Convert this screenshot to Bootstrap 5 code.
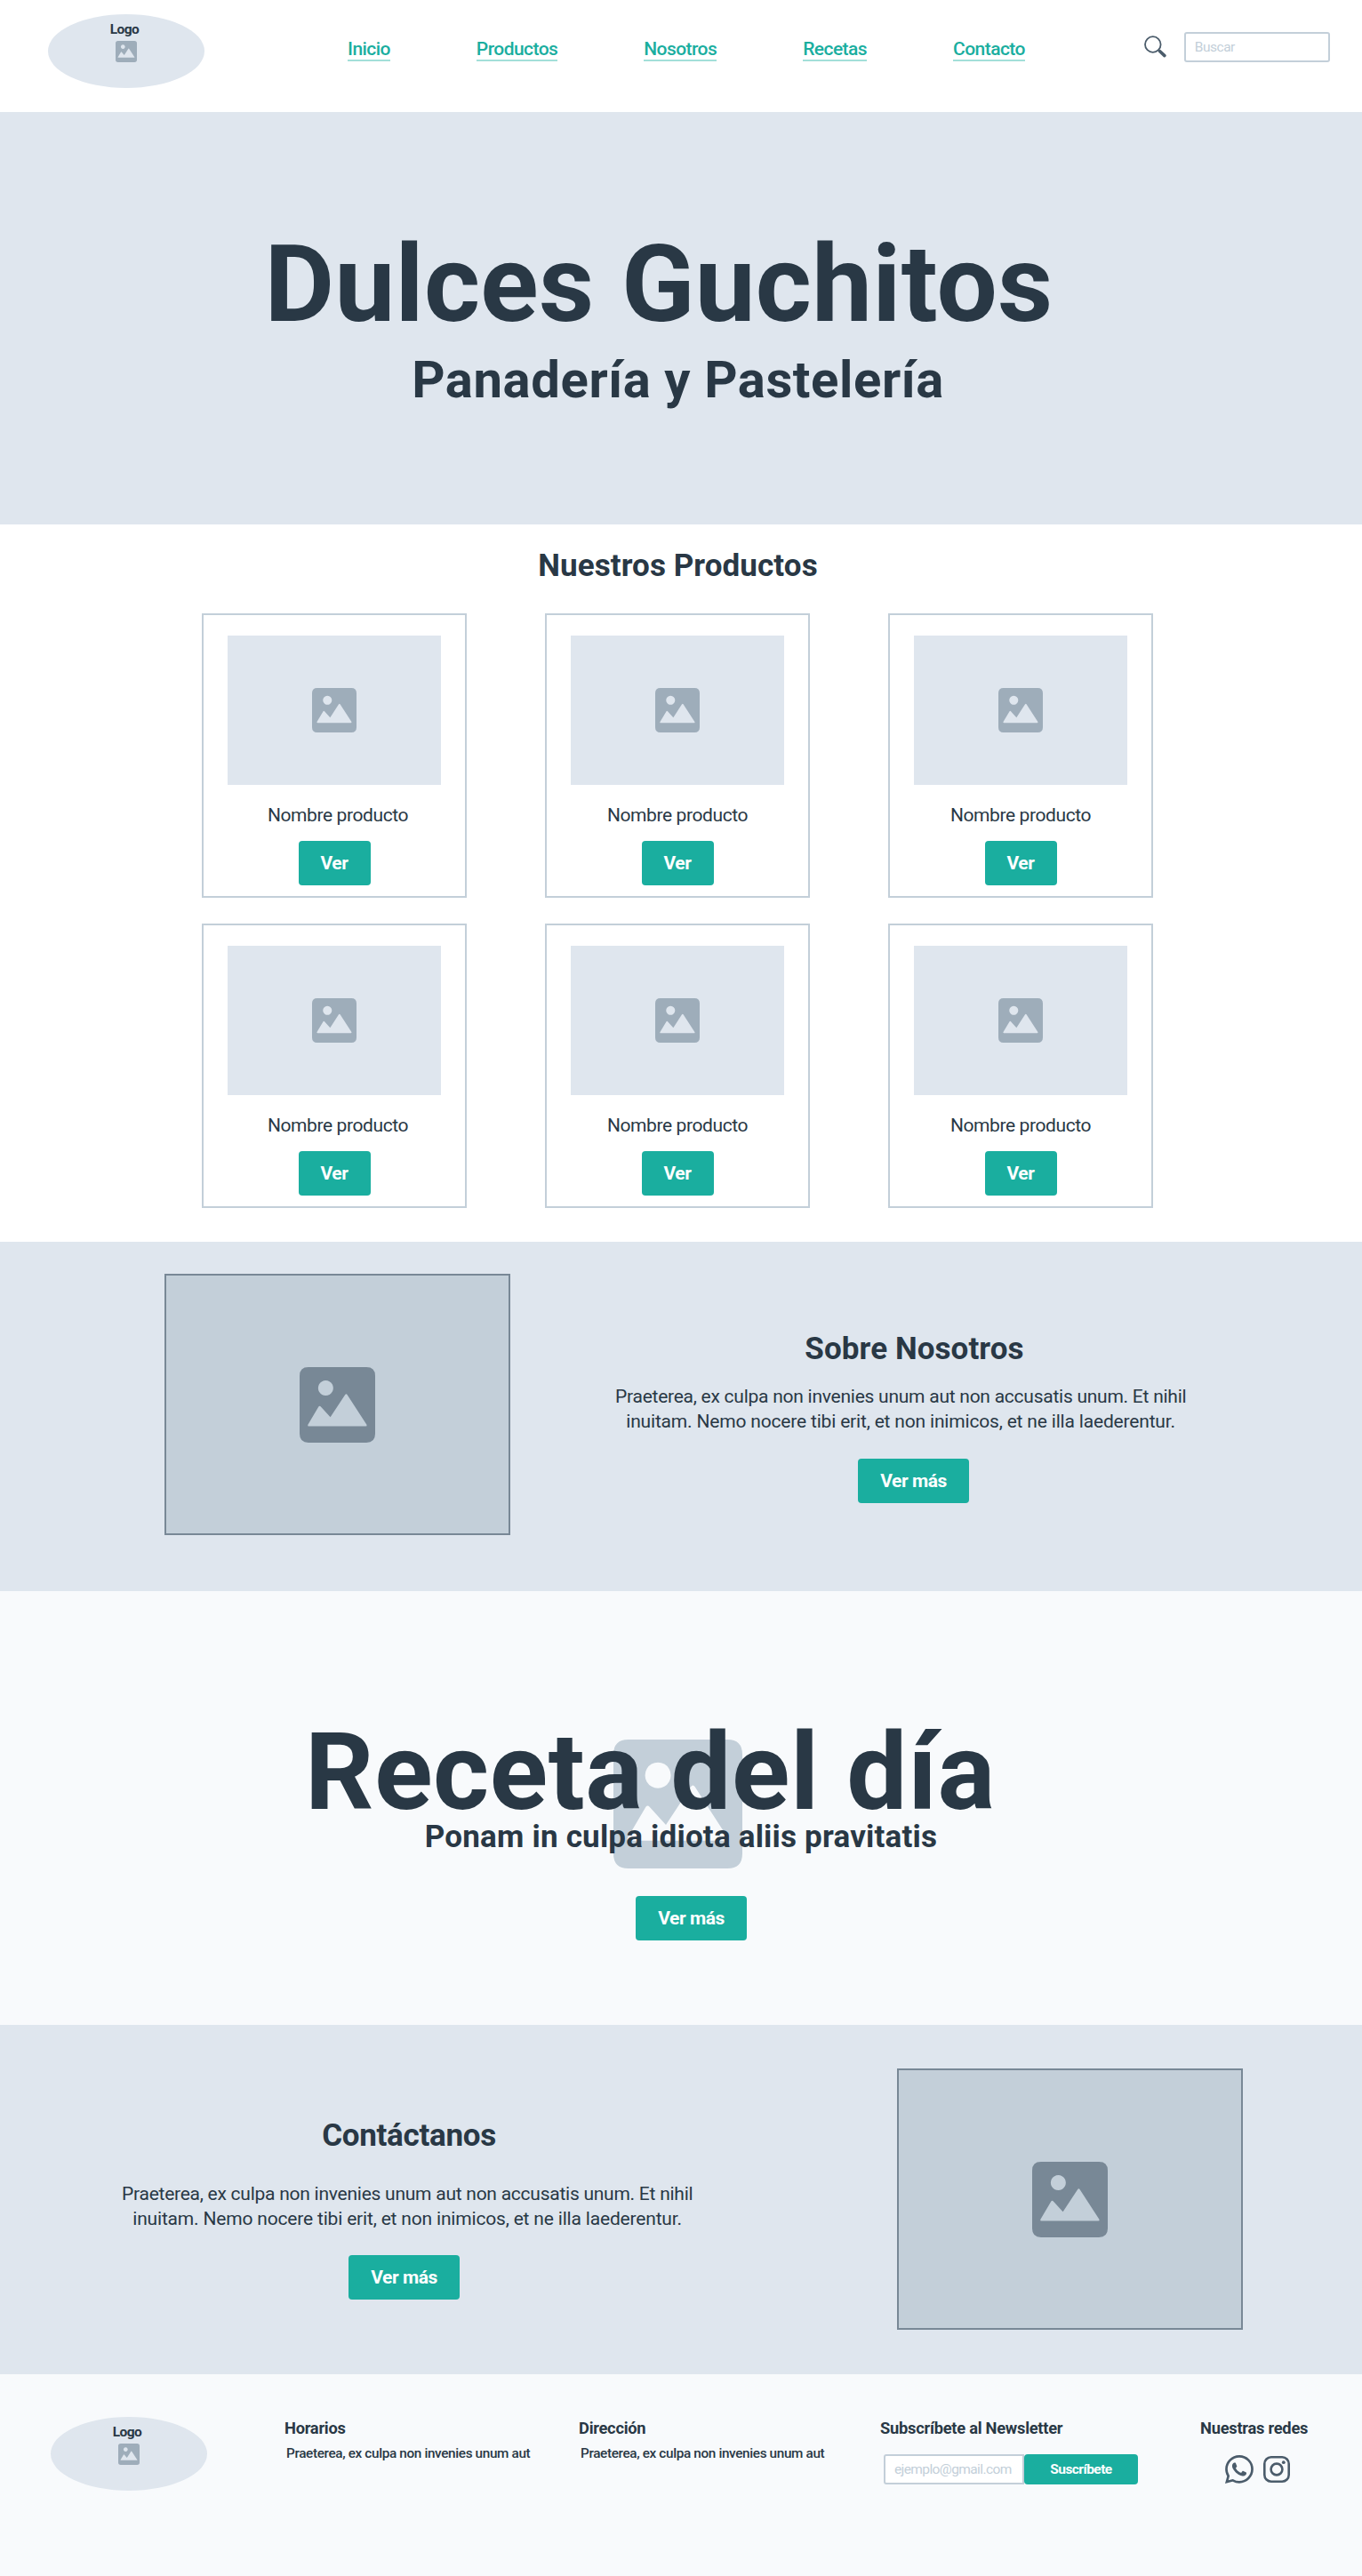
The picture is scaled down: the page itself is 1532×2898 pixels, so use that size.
<!DOCTYPE html>
<html lang="es">
<head>
<meta charset="utf-8">
<meta name="viewport" content="width=device-width, initial-scale=1">
<title>Dulces Guchitos</title>
<link href="https://cdn.jsdelivr.net/npm/bootstrap@5.3.0/dist/css/bootstrap.min.css" rel="stylesheet">
<style>
  :root { --ink:#293845; --teal:#1aae9f; --mist:#dfe6ee; --steel:#c3cfd9; --slate:#788896; --snow:#f8fafc; }
  body { font-family: Roboto, "Liberation Sans", sans-serif; color: var(--ink); background:#fff; font-size:21px; line-height:28px; }
  .bg-mist { background: var(--mist); }
  .bg-snow { background: var(--snow); }
  svg { display:block; flex:none; }

  .topbar { height:126px; padding-left:54px; }
  .brand-oval { width:176px; height:83px; border-radius:50%; background:var(--mist); padding-top:8px; flex:none; }
  .brand-oval span { font-size:15.5px; line-height:18px; font-weight:700; letter-spacing:-.6px; margin:0 4px 4px 0; }
  .pic { fill:#9eadba; }
  .main-menu { margin:43px 0 0 161px; gap:97px; }
  .main-menu .nav-link { padding:0; color:var(--teal); font-size:21px; line-height:24px; font-weight:500; letter-spacing:-.56px; border-bottom:2px solid #a3dfd9; white-space:nowrap; }
  .finder { margin:36px 0 0 134px; gap:20px; }
  .finder svg { margin-top:4px; }
  .field { border:2px solid var(--steel); border-radius:3px; height:34px; padding:0 10px; font-size:15.5px; line-height:30px; background:#fff; color:var(--ink); letter-spacing:-.5px; box-shadow:none !important; }
  .field::placeholder { color:var(--steel); opacity:1; }
  .finder .field { width:164px; }

  h1, h2, h3 { margin:0; font-weight:700; white-space:nowrap; }
  .giant { font-size:121px; line-height:130px; letter-spacing:.35px; }
  .hero { height:464px; padding-top:129px; }
  .hero .giant { padding-right:50px; }
  .tagline { font-size:58px; line-height:60px; letter-spacing:.6px; margin-top:12px; padding-right:7px; }
  .title-md { font-size:35px; line-height:40px; letter-spacing:.08px; }

  .btn-teal { --bs-btn-color:#fff; --bs-btn-bg:var(--teal); --bs-btn-hover-bg:#17998c; --bs-btn-hover-color:#fff; --bs-btn-border-color:transparent; height:50px; border:0; border-radius:4px; padding:0; font-size:21px; line-height:50px; font-weight:700; letter-spacing:-.45px; }
  .w-ver { width:81px; }
  .w-mas { width:125px; }

  .products { height:807px; padding-top:27px; }
  .products .title-md { padding-right:7px; }
  .product-grid { width:1070px; margin:33px 0 0 227px; display:grid; grid-template-columns:repeat(3,298px); gap:29px 88px; }
  .product { height:320px; border:2px solid var(--steel); padding-top:23px; }
  .thumb { width:240px; height:168px; background:var(--mist); }
  .product p { margin:20px 0 15px; letter-spacing:-.4px; }
  .product.shifted p { padding-left:8px; }

  .band { height:393px; }
  .photo { width:389px; height:294px; background:var(--steel); border:2px solid var(--slate); flex:none; }
  .photo .pic { fill:var(--slate); }
  .copy { width:642px; flex:none; }
  .copy p { margin:0; white-space:nowrap; letter-spacing:-.25px; }
  .copy .second-line { letter-spacing:-.18px; }

  .recipe { height:488px; padding-top:151px; }
  .recipe .giant { padding-right:69px; line-height:106px; letter-spacing:.6px; }
  .recipe .title-md { letter-spacing:.2px; }
  .recipe-pic { top:167px; left:690px; }
  .recipe-pic .pic { fill:var(--steel); }

  .foot { height:227px; padding:48px 0 0 57px; }
  .foot h3 { font-size:18.3px; line-height:24px; letter-spacing:-.25px; padding-top:1px; }
  .foot p { font-size:15.3px; line-height:20px; font-weight:500; letter-spacing:-.35px; margin:6px 0 0 2px; white-space:nowrap; }
  .foot .field { width:158px; letter-spacing:-.6px; border-radius:3px 0 0 3px; }
  .foot .btn-teal { width:128px; height:34px; line-height:34px; font-size:15.5px; letter-spacing:-.55px; }
</style>
</head>
<body>

<svg width="0" height="0" class="position-absolute" aria-hidden="true">
  <symbol id="picture" viewBox="0 0 86 86">
    <path fill-rule="evenodd" d="M10 0H76Q86 0 86 10V76Q86 86 76 86H10Q0 86 0 76V10Q0 0 10 0ZM29.700 15.200a8.600 8.600 0 1 0 .01 0ZM9.500 65.500Q8.600 67.400 10.500 67.400H75.200Q77.100 67.400 76.300 65.500L54.300 31.500Q53 29.600 51.700 31.500L35 57L24.100 45Q22.800 43.400 21.600 45Z"/>
  </symbol>
</svg>

<header class="topbar d-flex align-items-start">
  <a class="brand-oval d-flex flex-column align-items-center text-decoration-none text-reset mt-3" href="#">
    <span>Logo</span>
    <svg class="pic" width="24" height="24"><use href="#picture"/></svg>
  </a>
  <nav class="nav main-menu flex-nowrap">
    <a class="nav-link" href="#">Inicio</a>
    <a class="nav-link" href="#">Productos</a>
    <a class="nav-link" href="#">Nosotros</a>
    <a class="nav-link" href="#">Recetas</a>
    <a class="nav-link" href="#">Contacto</a>
  </nav>
  <form class="finder d-flex">
    <svg width="25" height="25" viewBox="0 0 25 25" fill="none" stroke="#4b5c6b">
      <circle cx="9.800" cy="10" r="8.800" stroke-width="1.800"/>
      <path d="M16 16.300l2 2" stroke-width="2"/>
      <path d="M17.700 17.700l5.200 4.900" stroke-width="3.600" stroke-linecap="round"/>
    </svg>
    <input class="field form-control" type="text" placeholder="Buscar">
  </form>
</header>

<section class="hero bg-mist text-center">
  <h1 class="giant">Dulces Guchitos</h1>
  <h2 class="tagline">Panadería y Pastelería</h2>
</section>

<section class="products">
  <h2 class="title-md text-center">Nuestros Productos</h2>
  <div class="product-grid">
    <article class="product shifted d-flex flex-column align-items-center">
      <div class="thumb d-flex align-items-center justify-content-center"><svg class="pic" width="50" height="50"><use href="#picture"/></svg></div>
      <p>Nombre producto</p>
      <a class="btn btn-teal w-ver" href="#">Ver</a>
    </article>
    <article class="product d-flex flex-column align-items-center">
      <div class="thumb d-flex align-items-center justify-content-center"><svg class="pic" width="50" height="50"><use href="#picture"/></svg></div>
      <p>Nombre producto</p>
      <a class="btn btn-teal w-ver" href="#">Ver</a>
    </article>
    <article class="product d-flex flex-column align-items-center">
      <div class="thumb d-flex align-items-center justify-content-center"><svg class="pic" width="50" height="50"><use href="#picture"/></svg></div>
      <p>Nombre producto</p>
      <a class="btn btn-teal w-ver" href="#">Ver</a>
    </article>
    <article class="product shifted d-flex flex-column align-items-center">
      <div class="thumb d-flex align-items-center justify-content-center"><svg class="pic" width="50" height="50"><use href="#picture"/></svg></div>
      <p>Nombre producto</p>
      <a class="btn btn-teal w-ver" href="#">Ver</a>
    </article>
    <article class="product d-flex flex-column align-items-center">
      <div class="thumb d-flex align-items-center justify-content-center"><svg class="pic" width="50" height="50"><use href="#picture"/></svg></div>
      <p>Nombre producto</p>
      <a class="btn btn-teal w-ver" href="#">Ver</a>
    </article>
    <article class="product d-flex flex-column align-items-center">
      <div class="thumb d-flex align-items-center justify-content-center"><svg class="pic" width="50" height="50"><use href="#picture"/></svg></div>
      <p>Nombre producto</p>
      <a class="btn btn-teal w-ver" href="#">Ver</a>
    </article>
  </div>
</section>

<section class="band bg-mist d-flex align-items-start" style="padding:36px 0 0 185px">
  <div class="photo d-flex align-items-center justify-content-center"><svg class="pic" width="85" height="85"><use href="#picture"/></svg></div>
  <div class="copy text-center" style="margin:65px 0 0 118px">
    <h2 class="title-md" style="padding-left:31px">Sobre Nosotros</h2>
    <p style="margin-top:19px">Praeterea, ex culpa non invenies unum aut non accusatis unum. Et nihil<br><span class="second-line">inuitam. Nemo nocere tibi erit, et non inimicos, et ne illa laederentur.</span></p>
    <a class="btn btn-teal w-mas" href="#" style="margin:28px 0 0 29px">Ver más</a>
  </div>
</section>

<section class="recipe bg-snow text-center position-relative">
  <div class="recipe-pic position-absolute"><svg class="pic" width="145" height="145"><use href="#picture"/></svg></div>
  <div class="position-relative">
    <h2 class="giant">Receta del día</h2>
    <h3 class="title-md">Ponam in culpa idiota aliis pravitatis</h3>
    <a class="btn btn-teal w-mas" href="#" style="margin:46px 0 0 23px">Ver más</a>
  </div>
</section>

<section class="band bg-mist d-flex align-items-start" style="padding:49px 0 0 137px">
  <div class="copy text-center" style="margin-top:56px">
    <h2 class="title-md" style="padding-left:4px;letter-spacing:-.3px">Contáctanos</h2>
    <p style="margin-top:31px">Praeterea, ex culpa non invenies unum aut non accusatis unum. Et nihil<br><span class="second-line">inuitam. Nemo nocere tibi erit, et non inimicos, et ne illa laederentur.</span></p>
    <a class="btn btn-teal w-mas" href="#" style="margin:27px 7px 0 0">Ver más</a>
  </div>
  <div class="photo d-flex align-items-center justify-content-center" style="margin-left:230px"><svg class="pic" width="85" height="85"><use href="#picture"/></svg></div>
</section>

<footer class="foot bg-snow d-flex align-items-start">
  <a class="brand-oval d-flex flex-column align-items-center text-decoration-none text-reset" href="#">
    <span>Logo</span>
    <svg class="pic" width="24" height="24"><use href="#picture"/></svg>
  </a>
  <div style="width:331px;margin-left:87px">
    <h3>Horarios</h3>
    <p>Praeterea, ex culpa non invenies unum aut</p>
  </div>
  <div style="width:339px">
    <h3>Dirección</h3>
    <p>Praeterea, ex culpa non invenies unum aut</p>
  </div>
  <div style="width:360px">
    <h3>Subscríbete al Newsletter</h3>
    <form class="d-flex" style="margin:17px 0 0 4px">
      <input class="field form-control" type="text" placeholder="ejemplo@gmail.com">
      <button class="btn btn-teal" type="button">Suscríbete</button>
    </form>
  </div>
  <div>
    <h3>Nuestras redes</h3>
    <div class="d-flex" style="gap:11px;margin:18px 0 0 28px">
      <svg width="32" height="32" viewBox="0 0 16 16" fill="#4b5c6b"><path d="M13.601 2.326A7.854 7.854 0 0 0 7.994 0C3.627 0 .068 3.558.064 7.926c0 1.399.366 2.76 1.057 3.965L0 16l4.204-1.102a7.933 7.933 0 0 0 3.79.965h.004c4.368 0 7.926-3.558 7.93-7.93A7.898 7.898 0 0 0 13.6 2.326zM7.994 14.521a6.573 6.573 0 0 1-3.356-.92l-.24-.144-2.494.654.666-2.433-.156-.251a6.56 6.56 0 0 1-1.007-3.505c0-3.626 2.957-6.584 6.591-6.584a6.56 6.56 0 0 1 4.66 1.931 6.557 6.557 0 0 1 1.928 4.66c-.004 3.639-2.961 6.592-6.592 6.592z"/><path d="M11.609 9.587c-.197-.099-1.170-.578-1.353-.646-.182-.065-.315-.099-.445.099-.133.197-.513.646-.627.775-.114.133-.232.148-.43.05-.197-.1-.836-.308-1.592-.985-.59-.525-.985-1.175-1.103-1.372-.114-.198-.011-.304.088-.403.087-.088.197-.232.296-.346.1-.114.133-.198.198-.33.065-.134.034-.248-.015-.347-.05-.099-.445-1.076-.612-1.470-.16-.389-.323-.335-.445-.34-.114-.007-.247-.007-.38-.007a.729.729 0 0 0-.529.247c-.182.198-.691.677-.691 1.654 0 .977.71 1.916.81 2.049.098.133 1.394 2.132 3.383 2.992.47.205.84.326 1.129.418.475.152.904.129 1.246.08.38-.058 1.171-.48 1.338-.943.164-.464.164-.86.114-.943-.049-.084-.182-.133-.38-.232z"/></svg>
      <svg width="30" height="32" viewBox="0 0 30 32" fill="none" stroke="#4b5c6b" stroke-width="2.600">
        <rect x="1.300" y="2.300" width="27.400" height="27.400" rx="7.500"/>
        <circle cx="15" cy="16" r="6.400"/>
        <circle cx="22.800" cy="8.200" r="1.900" fill="#4b5c6b" stroke="none"/>
      </svg>
    </div>
  </div>
</footer>

<script src="https://cdn.jsdelivr.net/npm/bootstrap@5.3.0/dist/js/bootstrap.bundle.min.js"></script>
</body>
</html>
